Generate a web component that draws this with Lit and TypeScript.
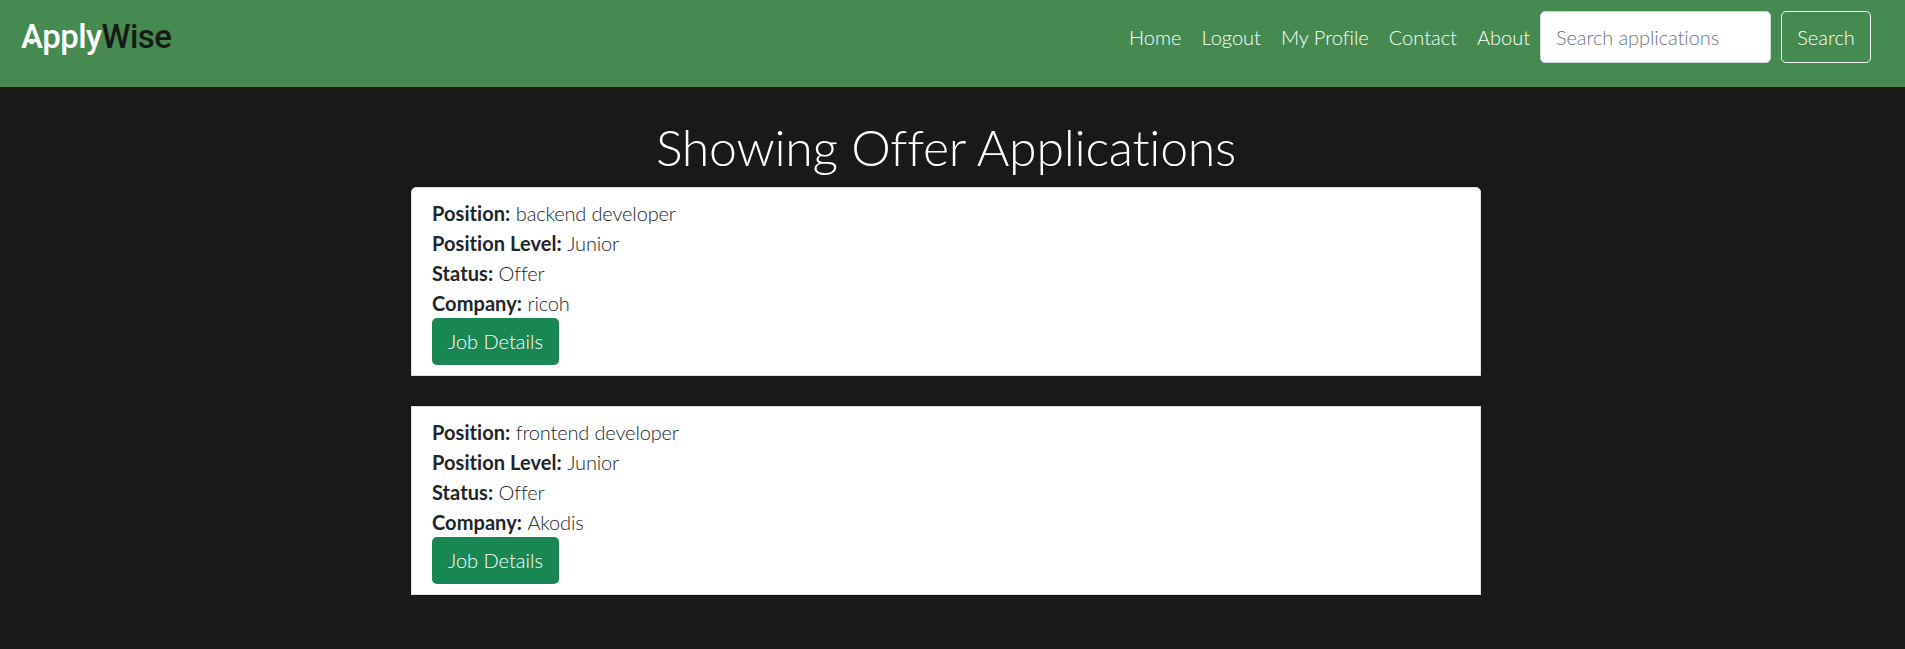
import { LitElement, html, css } from "lit";
import { customElement, property } from "lit/decorators.js";

interface Application {
  position: string;
  level: string;
  status: string;
  company: string;
}

@customElement("site-header")
class SiteHeader extends LitElement {
  static styles = css`
    :host { display: block; }
    .bar {
      box-sizing: border-box;
      height: 87px;
      padding: 11px 34px 0 21px;
      display: flex;
      align-items: flex-start;
      justify-content: space-between;
      background: #448a51;
    }
    .brand {
      display: flex;
      margin-top: 6px;
      font: 500 33px/40px Roboto, sans-serif;
      letter-spacing: -0.6px;
      color: #fff;
      white-space: nowrap;
      text-decoration: none;
    }
    .wise { color: #191917; }
    .initial { position: relative; }
    .mark {
      position: absolute;
      left: 0;
      top: 0;
      width: 22px;
      height: 40px;
    }
    .menu { display: flex; height: 52px; align-items: center; }
    .link {
      padding: 0 10px;
      color: #fff;
      text-decoration: none;
      white-space: nowrap;
    }
    .search { display: flex; gap: 10px; height: 52px; }
    .field, .submit {
      box-sizing: border-box;
      height: 52px;
      margin: 0;
      font: inherit;
      font-variant-ligatures: none;
      border-radius: 5px;
    }
    .field {
      width: 231px;
      padding: 0 15px;
      border: 1px solid #ced4da;
      background: #fff;
      letter-spacing: -0.08px;
    }
    .field::placeholder { color: #6c757d; opacity: 1; }
    .submit {
      width: 90px;
      padding: 0;
      border: 1px solid #f8f9fa;
      background: transparent;
      color: #fff;
    }
  `;

  render() {
    const links = ["Home", "Logout", "My Profile", "Contact", "About"];
    return html`
      <header class="bar">
        <a class="brand"><span class="initial">A<svg class="mark" viewBox="0 0 22 40" aria-hidden="true">
          <path d="M10.7 16 L15 29.5 L16 32.5 L5.4 32.5 L6.4 29.5 Z" fill="#448a51"></path>
          <circle cx="10.7" cy="24.5" r="2.7" fill="#fff"></circle>
        </svg></span><span>pply</span><span class="wise">Wise</span></a>
        <nav class="menu">
          ${links.map((l) => html`<a class="link">${l}</a>`)}
          <form class="search">
            <input class="field" placeholder="Search applications" />
            <button class="submit" type="button">Search</button>
          </form>
        </nav>
      </header>
    `;
  }
}

@customElement("application-item")
class ApplicationItem extends LitElement {
  @property({ attribute: false }) item!: Application;

  static styles = css`
    :host {
      display: block;
      box-sizing: border-box;
      height: 189px;
      padding: 10px 20px;
      border: 1px solid #dfdfdf;
      background: #fff;
      color: #212529;
    }
    .label { font-weight: 700; letter-spacing: 0.07px; }
    .value { letter-spacing: -0.15px; }
    .details {
      box-sizing: border-box;
      display: block;
      width: 127px;
      height: 47px;
      margin: 0;
      padding: 0 0 1px;
      border: 0;
      border-radius: 5px;
      background: #198754;
      color: #fff;
      font: inherit;
    }
  `;

  render() {
    const rows = [
      ["Position:", this.item.position],
      ["Position Level:", this.item.level],
      ["Status:", this.item.status],
      ["Company:", this.item.company],
    ];
    return html`
      ${rows.map(([k, v]) => html`<div><span class="label">${k}</span> <span class="value">${v}</span></div>`)}
      <button class="details">Job Details</button>
    `;
  }
}

@customElement("app-root")
class AppRoot extends LitElement {
  static styles = css`
    :host {
      display: block;
      min-height: 100vh;
      background: #191917;
      font: 300 20px/30px Lato, sans-serif;
      font-variant-ligatures: none;
    }
    .content {
      width: 1070px;
      margin-left: 411px;
      padding-top: 30px;
    }
    .title {
      margin: 0 0 10px;
      font-size: 50px;
      font-weight: 300;
      line-height: 60px;
      letter-spacing: -0.25px;
      text-align: center;
      color: #fff;
    }
    .list { display: grid; gap: 30px; }
    .first { border-radius: 5px 5px 0 0; }
  `;

  private items: Application[] = [
    { position: "backend developer", level: "Junior", status: "Offer", company: "ricoh" },
    { position: "frontend developer", level: "Junior", status: "Offer", company: "Akodis" },
  ];

  render() {
    return html`
      <site-header></site-header>
      <main class="content">
        <h1 class="title">Showing Offer Applications</h1>
        <div class="list">
          ${this.items.map(
            (item, i) => html`<application-item class=${i === 0 ? "first" : "rest"} .item=${item}></application-item>`
          )}
        </div>
      </main>
    `;
  }
}
